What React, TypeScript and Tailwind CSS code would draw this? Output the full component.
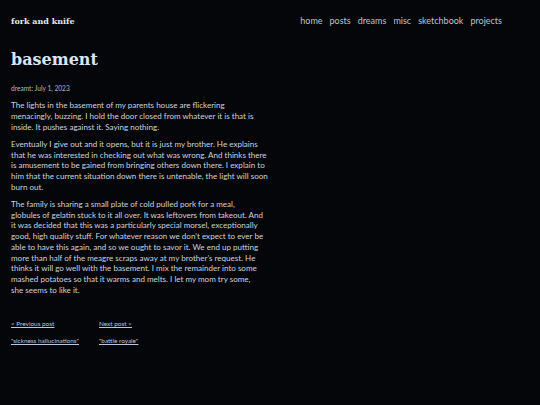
// line breaks follow the original page's wrapping
const paragraphs = [
  [
    "The lights in the basement of my parents house are flickering",
    "menacingly, buzzing. I hold the door closed from whatever it is that is",
    "inside. It pushes against it. Saying nothing.",
  ],
  [
    "Eventually I give out and it opens, but it is just my brother. He explains",
    "that he was interested in checking out what was wrong. And thinks there",
    "is amusement to be gained from bringing others down there. I explain to",
    "him that the current situation down there is untenable, the light will soon",
    "burn out.",
  ],
  [
    "The family is sharing a small plate of cold pulled pork for a meal,",
    "globules of gelatin stuck to it all over. It was leftovers from takeout. And",
    "it was decided that this was a particularly special morsel, exceptionally",
    "good, high quality stuff. For whatever reason we don\u2019t expect to ever be",
    "able to have this again, and so we ought to savor it. We end up putting",
    "more than half of the meagre scraps away at my brother\u2019s request. He",
    "thinks it will go well with the basement. I mix the remainder into some",
    "mashed potatoes so that it warms and melts. I let my mom try some,",
    "she seems to like it.",
  ],
];

const nav = ["home", "posts", "dreams", "misc", "sketchbook", "projects"];

export default function App() {
  return (
    <div
      className="min-h-[405px] w-[540px] bg-[#05060a] text-[#ccd3de]"
      style={{ fontFamily: 'Lato, "Open Sans", sans-serif' }}
    >
      <header className="flex items-center justify-between pl-[11px] pr-[38px] pt-[14px]">
        <span
          className="text-[8px] font-bold text-[#e2e8f0]"
          style={{ fontFamily: '"DejaVu Serif", serif' }}
        >
          fork and knife
        </span>
        <nav className="flex gap-[7px] text-[9px] text-[#b9c3d2]">
          {nav.map((n) => (
            <a key={n}>{n}</a>
          ))}
        </nav>
      </header>

      <main className="pl-[11px]">
        <h1
          className="mt-[24px] text-[16px] font-bold leading-none text-[#d8e6f7]"
          style={{ fontFamily: '"DejaVu Serif", serif' }}
        >
          basement
        </h1>
        <p className="mt-[16px] text-[6.6px] text-[#aeb6c2]">dreamt: July 1, 2023</p>

        <div className="mt-[7px] flex flex-col gap-[6.5px] text-[8.05px] leading-[10.7px]">
          {paragraphs.map((lines, i) => (
            <p key={i}>
              {lines.map((l, j) => (
                <span key={j} className="block whitespace-nowrap">
                  {l}
                </span>
              ))}
            </p>
          ))}
        </div>

        <div className="mt-[24px] grid w-[200px] grid-cols-[88px_1fr] gap-y-[7px] text-[6.4px] text-[#b9c7dc] underline">
          <a>&lt; Previous post</a>
          <a>Next post &gt;</a>
          <a>"sickness hallucinations"</a>
          <a>"battle royale"</a>
        </div>
      </main>
    </div>
  );
}
